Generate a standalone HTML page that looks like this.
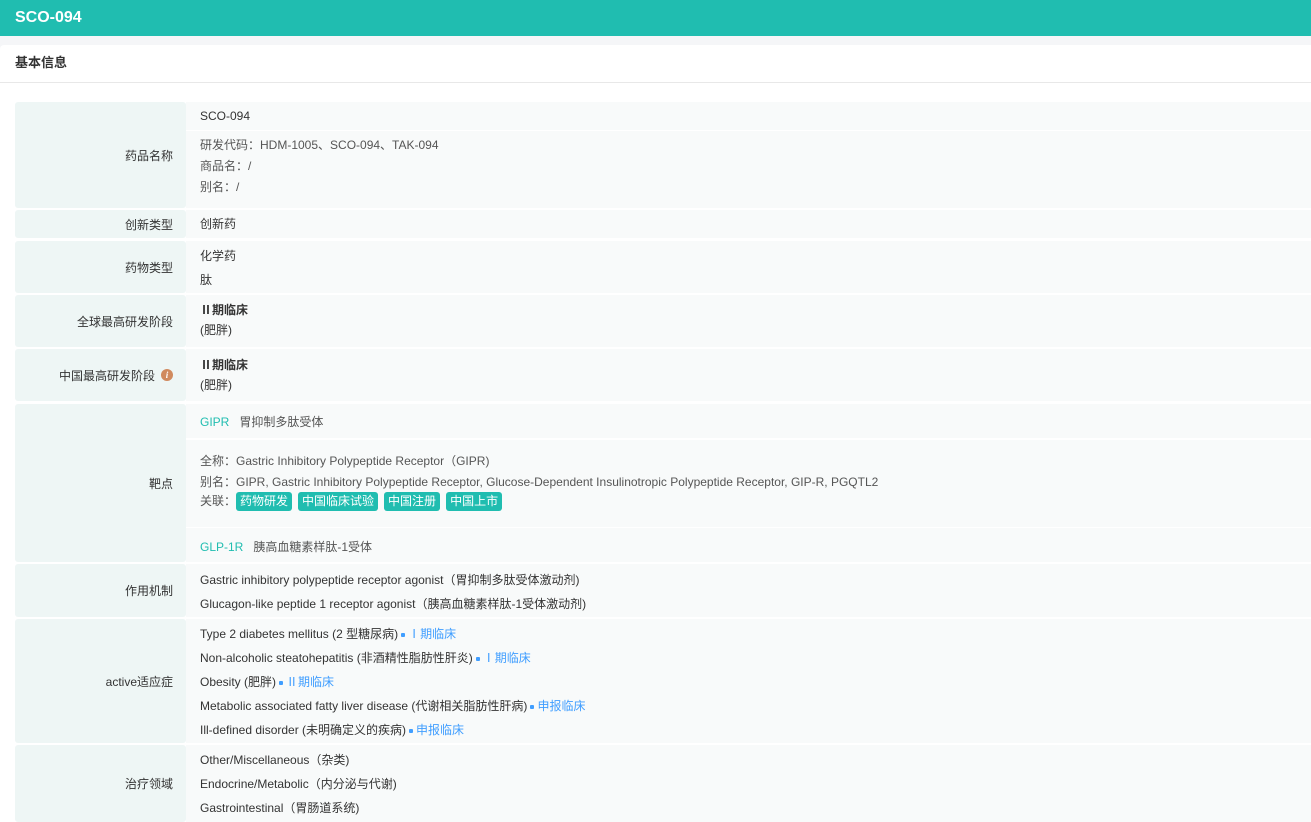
<!DOCTYPE html>
<html><head><meta charset="utf-8"><style>
*{margin:0;padding:0;box-sizing:border-box}
body{width:1311px;height:822px;overflow:hidden;background:#f5f6f8;font-family:"Liberation Sans","Noto Sans CJK SC",sans-serif;font-size:12px;color:#333;position:relative}
.hd{position:absolute;left:0;top:0;width:1311px;height:36px;background:#20bdb0;color:#fff;font-weight:bold;font-size:16px;line-height:36px;padding-left:15px}
.card{position:absolute;left:0;top:45px;width:1311px;height:777px;background:#fff;border-radius:4px 0 0 0}
.st{position:absolute;left:15px;top:55px;font-weight:bold;font-size:13px;line-height:16px}
.ln{position:absolute;left:0;top:82px;width:1311px;height:1px;background:#e8e8e8}
.lb{position:absolute;left:15px;width:171px;background:#eef6f5;border-radius:3px;text-align:right;padding-right:13px;display:flex;align-items:center;justify-content:flex-end}
.vb{position:absolute;left:186px;width:1125px;background:#f8fafa}
.t{position:absolute;left:200px;white-space:nowrap;line-height:16px}
.g{color:#20bdb0}
.b{color:#409eff}
.m{color:#555}
.tag{display:inline-block;background:#20bdb0;color:#fff;border-radius:3px;padding:0 4px;line-height:19px;margin-right:6px}
.dot{display:inline-block;width:4px;height:4px;background:#409eff;border-radius:1px;vertical-align:middle;margin:0 3px}
.i{display:inline-block;width:12px;height:12px;border-radius:50%;background:#d08a5e;color:#fff;font-size:9px;font-style:italic;font-weight:bold;line-height:12px;text-align:center;margin-left:6px;font-family:"Liberation Serif",serif}
</style></head><body>
<div class="hd">SCO-094</div>
<div class="card"></div>
<div class="st">基本信息</div>
<div class="ln"></div>

<div class="lb" style="top:102px;height:106px">药品名称</div>
<div class="vb" style="top:102px;height:28px"></div>
<div class="vb" style="top:131px;height:77px"></div>
<div class="t" style="top:108px">SCO-094</div>
<div class="t m" style="top:137px">研发代码：HDM-1005、SCO-094、TAK-094</div>
<div class="t m" style="top:158px">商品名：/</div>
<div class="t m" style="top:179px">别名：/</div>

<div class="lb" style="top:210px;height:28px">创新类型</div>
<div class="vb" style="top:210px;height:28px"></div>
<div class="t" style="top:216px">创新药</div>

<div class="lb" style="top:241px;height:52px">药物类型</div>
<div class="vb" style="top:241px;height:52px"></div>
<div class="t" style="top:248px">化学药</div>
<div class="t" style="top:272px">肽</div>

<div class="lb" style="top:295px;height:52px">全球最高研发阶段</div>
<div class="vb" style="top:295px;height:52px"></div>
<div class="t" style="top:302px;font-weight:bold">Ⅱ期临床</div>
<div class="t" style="top:322px">(肥胖)</div>

<div class="lb" style="top:349px;height:52px">中国最高研发阶段<span class="i">i</span></div>
<div class="vb" style="top:349px;height:52px"></div>
<div class="t" style="top:357px;font-weight:bold">Ⅱ期临床</div>
<div class="t" style="top:377px">(肥胖)</div>

<div class="lb" style="top:404px;height:158px">靶点</div>
<div class="vb" style="top:404px;height:34px"></div>
<div class="vb" style="top:440px;height:87px"></div>
<div class="vb" style="top:528px;height:34px"></div>
<div class="t" style="top:414px"><span class="g">GIPR</span>&nbsp;&nbsp; <span class="m">胃抑制多肽受体</span></div>
<div class="t m" style="top:453px">全称：Gastric Inhibitory Polypeptide Receptor（GIPR)</div>
<div class="t m" style="top:474px">别名：GIPR, Gastric Inhibitory Polypeptide Receptor, Glucose-Dependent Insulinotropic Polypeptide Receptor, GIP-R, PGQTL2</div>
<div class="t m" style="top:492px;line-height:19px">关联：<span class="tag">药物研发</span><span class="tag">中国临床试验</span><span class="tag">中国注册</span><span class="tag">中国上市</span></div>
<div class="t" style="top:539px"><span class="g">GLP-1R</span>&nbsp;&nbsp; <span class="m">胰高血糖素样肽-1受体</span></div>

<div class="lb" style="top:564px;height:53px">作用机制</div>
<div class="vb" style="top:564px;height:53px"></div>
<div class="t" style="top:572px">Gastric inhibitory polypeptide receptor agonist（胃抑制多肽受体激动剂)</div>
<div class="t" style="top:596px">Glucagon-like peptide 1 receptor agonist（胰高血糖素样肽-1受体激动剂)</div>

<div class="lb" style="top:619px;height:124px">active适应症</div>
<div class="vb" style="top:619px;height:124px"></div>
<div class="t" style="top:626px">Type 2 diabetes mellitus (2 型糖尿病)<span class="dot"></span><span class="b">Ⅰ期临床</span></div>
<div class="t" style="top:650px">Non-alcoholic steatohepatitis (非酒精性脂肪性肝炎)<span class="dot"></span><span class="b">Ⅰ期临床</span></div>
<div class="t" style="top:674px">Obesity (肥胖)<span class="dot"></span><span class="b">Ⅱ期临床</span></div>
<div class="t" style="top:698px">Metabolic associated fatty liver disease (代谢相关脂肪性肝病)<span class="dot"></span><span class="b">申报临床</span></div>
<div class="t" style="top:722px">Ill-defined disorder (未明确定义的疾病)<span class="dot"></span><span class="b">申报临床</span></div>

<div class="lb" style="top:745px;height:77px">治疗领域</div>
<div class="vb" style="top:745px;height:77px"></div>
<div class="t" style="top:752px">Other/Miscellaneous（杂类)</div>
<div class="t" style="top:776px">Endocrine/Metabolic（内分泌与代谢)</div>
<div class="t" style="top:800px">Gastrointestinal（胃肠道系统)</div>
</body></html>
